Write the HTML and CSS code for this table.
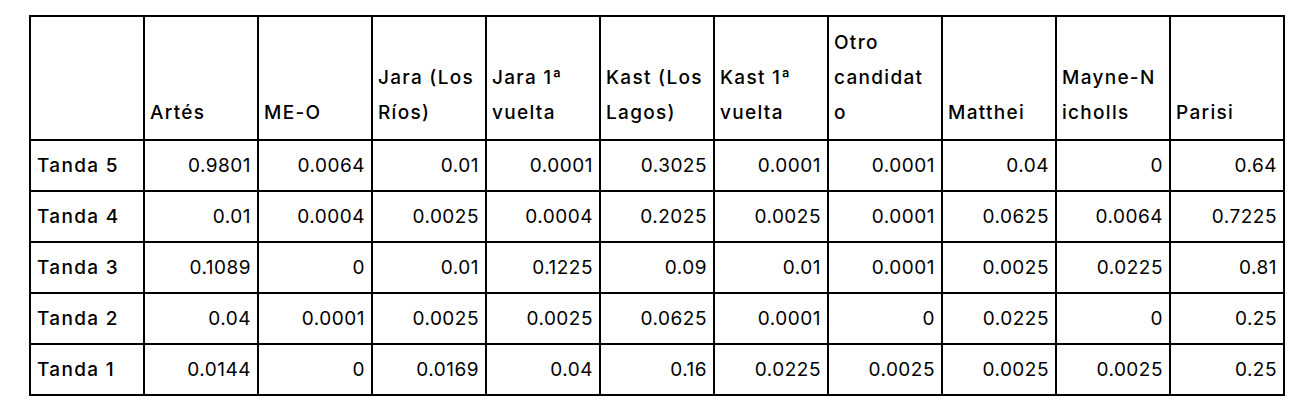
FILE: index.html
```html
<!DOCTYPE html>
<html lang="es">
<head>
  <meta charset="UTF-8">
  <meta name="viewport" content="width=device-width, initial-scale=1.0">
  <title>Tandas</title>
  <link rel="stylesheet" href="styles.css">
</head>
<body>
  <table class="grid">
    <thead>
      <tr>
        <th></th>
        <th>Artés</th>
        <th>ME-O</th>
        <th>Jara (Los<br>Ríos)</th>
        <th>Jara 1ª<br>vuelta</th>
        <th>Kast (Los<br>Lagos)</th>
        <th>Kast 1ª<br>vuelta</th>
        <th>Otro<br>candidat<br>o</th>
        <th>Matthei</th>
        <th>Mayne-N<br>icholls</th>
        <th>Parisi</th>
      </tr>
    </thead>
    <tbody>
      <tr>
        <th>Tanda 5</th>
        <td>0.9801</td><td>0.0064</td><td>0.01</td><td>0.0001</td><td>0.3025</td>
        <td>0.0001</td><td>0.0001</td><td>0.04</td><td>0</td><td>0.64</td>
      </tr>
      <tr>
        <th>Tanda 4</th>
        <td>0.01</td><td>0.0004</td><td>0.0025</td><td>0.0004</td><td>0.2025</td>
        <td>0.0025</td><td>0.0001</td><td>0.0625</td><td>0.0064</td><td>0.7225</td>
      </tr>
      <tr>
        <th>Tanda 3</th>
        <td>0.1089</td><td>0</td><td>0.01</td><td>0.1225</td><td>0.09</td>
        <td>0.01</td><td>0.0001</td><td>0.0025</td><td>0.0225</td><td>0.81</td>
      </tr>
      <tr>
        <th>Tanda 2</th>
        <td>0.04</td><td>0.0001</td><td>0.0025</td><td>0.0025</td><td>0.0625</td>
        <td>0.0001</td><td>0</td><td>0.0225</td><td>0</td><td>0.25</td>
      </tr>
      <tr>
        <th>Tanda 1</th>
        <td>0.0144</td><td>0</td><td>0.0169</td><td>0.04</td><td>0.16</td>
        <td>0.0225</td><td>0.0025</td><td>0.0025</td><td>0.0025</td><td>0.25</td>
      </tr>
    </tbody>
  </table>
</body>
</html>
```

FILE: styles.css
```css
body {
  margin: 0;
  padding: 15px 0 0 29px;
  background: #fff;
  color: #000;
  font-family: Inter, "Noto Sans", sans-serif;
  font-size: 19px;
}
.grid {
  width: 1256px;
  table-layout: fixed;
  border-collapse: separate;
  border-spacing: 0;
  border-top: 2px solid #000;
  border-left: 2px solid #000;
}
.grid th, .grid td {
  border-right: 2px solid #000;
  border-bottom: 2px solid #000;
  line-height: 35px;
  padding: 7px 6px 7px 5px;
  white-space: nowrap;
  overflow: hidden;
}
.grid th {
  font-weight: 500;
  text-align: left;
  letter-spacing: 1.3px;
}
.grid thead th {
  vertical-align: bottom;
  padding-top: 8px;
  padding-bottom: 9px;
}
.grid tbody th {
  padding-left: 6px;
}
.grid td {
  text-align: right;
  letter-spacing: 0.5px;
}
```
